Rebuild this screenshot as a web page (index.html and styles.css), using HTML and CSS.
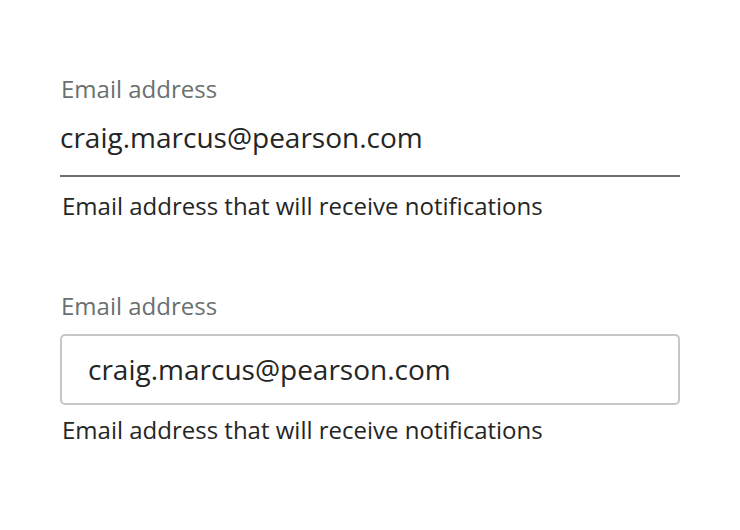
FILE: index.html
```html
<!DOCTYPE html>
<html>
<head>
<meta charset="utf-8">
<link rel="stylesheet" href="styles.css">
</head>
<body>
<main class="page">
  <div class="field field-underline">
    <label class="label">Email address</label>
    <div class="value-line">craig.marcus@pearson.com</div>
    <div class="helper">Email address that will receive notifications</div>
  </div>
  <div class="field field-box">
    <label class="label">Email address</label>
    <div class="value-box">craig.marcus@pearson.com</div>
    <div class="helper helper-box">Email address that will receive notifications</div>
  </div>
</main>
</body>
</html>
```
FILE: styles.css
```css
html, body { margin: 0; padding: 0; background: #fff; }
body { font-family: "Open Sans", sans-serif; color: #252525; }
.page { padding: 75px 60px 0 60px; width: 620px; display: flex; flex-direction: column; gap: 72px; }
.field { display: flex; flex-direction: column; }
.label { font-size: 24px; line-height: 28px; color: #6a7070; padding-left: 1px; }
.value-line { font-size: 28px; line-height: 36px; padding: 16px 0 20px 0; border-bottom: 2px solid #6a7070; }
.value-box { margin-top: 14px; height: 71px; box-sizing: border-box; border: 2px solid #c7c7c7; border-radius: 5px; font-size: 28px; line-height: 36px; padding: 15px 26px; }
.helper { font-size: 24px; line-height: 28px; padding: 15px 0 0 2px; }
.helper-box { padding-top: 11px; }
```
